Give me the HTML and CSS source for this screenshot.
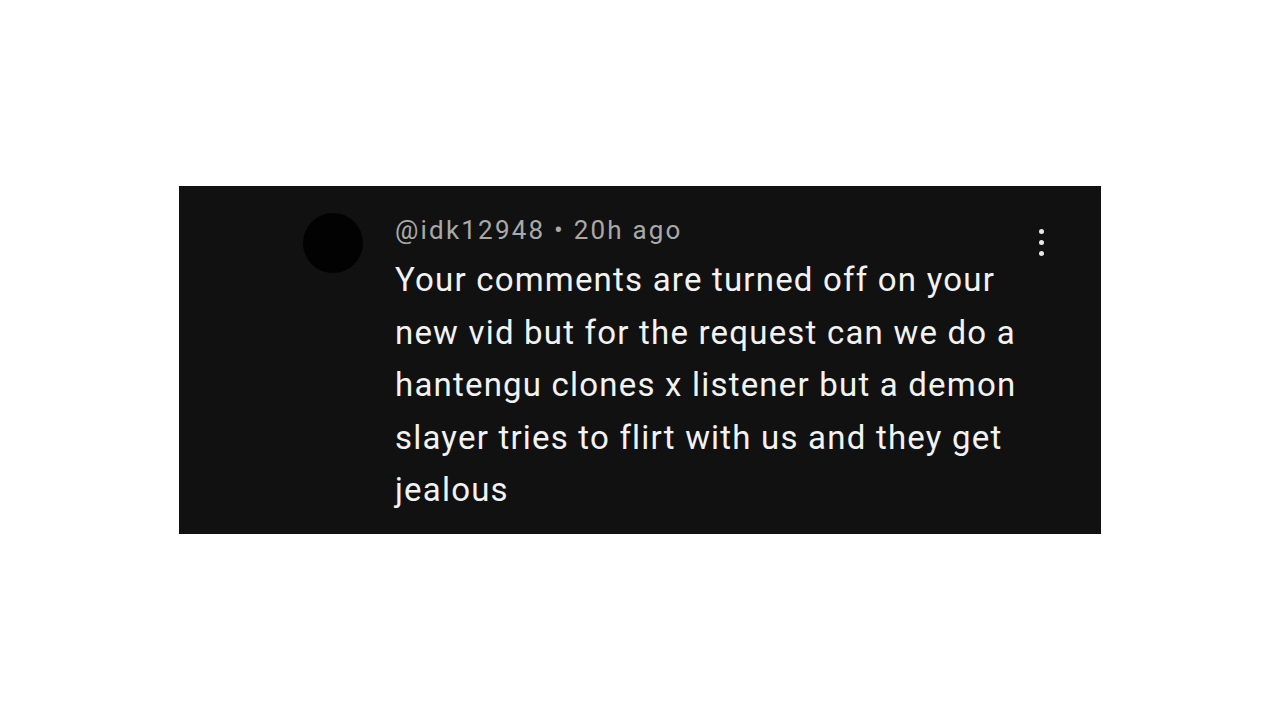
FILE: index.html
```html
<!DOCTYPE html>
<html>
<head>
<meta charset="utf-8">
<link rel="stylesheet" href="styles.css">
</head>
<body>
<div class="stage">
  <div class="card">
    <div class="avatar"></div>
    <div class="body">
      <div class="meta">@idk12948 • 20h ago</div>
      <div class="text">Your comments are turned off on your new vid but for the request can we do a hantengu clones x listener but a demon slayer tries to flirt with us and they get jealous</div>
    </div>
    <div class="menu"><span class="dot"></span><span class="dot"></span><span class="dot"></span></div>
  </div>
</div>
</body>
</html>
```
FILE: styles.css
```css
html, body { margin: 0; padding: 0; background: #fff; }
.stage { width: 1280px; height: 720px; display: flex; justify-content: center; align-items: flex-start; padding-top: 186px; box-sizing: border-box; }
.card { width: 922px; height: 348px; background: #111111; display: flex; align-items: flex-start; box-sizing: border-box; padding: 27px 0 0 124px; font-family: Roboto, "Noto Sans", sans-serif; }
.avatar { width: 60px; height: 60px; border-radius: 50%; background: #020202; flex: none; }
.body { margin-left: 32px; width: 640px; flex: none; }
.meta { color: #a9a9a9; font-size: 26px; line-height: 36px; letter-spacing: 2.2px; margin-top: -1px; }
.text { color: #f2f2f2; font-size: 33px; line-height: 52.5px; letter-spacing: 1.2px; margin-top: 6px; }
.menu { display: flex; flex-direction: column; gap: 6px; margin-left: 4px; margin-top: 16px; }
.dot { width: 5px; height: 5px; border-radius: 50%; background: #e8e8e8; display: block; }
```
